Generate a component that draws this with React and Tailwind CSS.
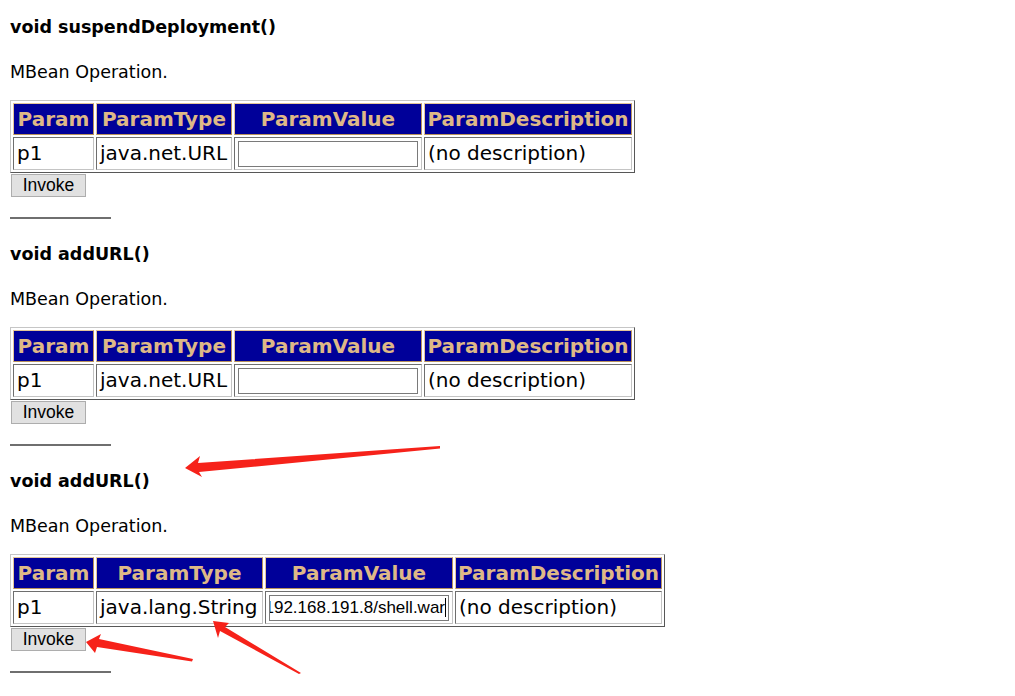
const operations = [
  {
    name: 'void suspendDeployment()',
    type: 'java.net.URL',
    value: '',
    cols: ['w-[81px]', 'w-[136px]', 'w-[188px]', 'w-[208px]'],
  },
  {
    name: 'void addURL()',
    type: 'java.net.URL',
    value: '',
    cols: ['w-[81px]', 'w-[136px]', 'w-[188px]', 'w-[208px]'],
  },
  {
    name: 'void addURL()',
    type: 'java.lang.String',
    value: 'http://192.168.191.8/shell.war',
    cols: ['w-[81px]', 'w-[167px]', 'w-[188px]', 'w-[207px]'],
  },
];

const headers = ['Param', 'ParamType', 'ParamValue', 'ParamDescription'];

const th =
  'h-[32px] bg-[#000099] text-[#deb887] font-bold text-[20px] leading-[28px] text-center px-[1px] border border-t-[#e2c49a] border-l-[#e2c49a] border-r-[#b8925e] border-b-[#b8925e] whitespace-nowrap';
const td =
  'h-[33px] text-[20px] leading-[27px] text-black px-[3px] align-middle border border-t-[#6e6e6e] border-l-[#6e6e6e] border-r-[#c4c4c4] border-b-[#c4c4c4] whitespace-nowrap';

const Operation = ({ op, first }) => (
  <section className={first ? 'pt-[16px]' : 'mt-[24px]'}>
    <h3 className="text-[17.5px] leading-[22px] font-bold text-black">{op.name}</h3>
    <p className="mt-[23px] text-[17.5px] leading-[22px] text-black">MBean Operation.</p>
    <table className="mt-[17px] border-separate border-spacing-[2px] border border-t-[#c6c6c6] border-l-[#c6c6c6] border-r-[#575757] border-b-[#575757]">
      <thead>
        <tr>
          {headers.map((h, i) => (
            <th key={h} className={`${th} ${op.cols[i]}`}>
              {h}
            </th>
          ))}
        </tr>
      </thead>
      <tbody>
        <tr>
          <td className={`${td} ${op.cols[0]}`}>p1</td>
          <td className={`${td} ${op.cols[1]}`}>{op.type}</td>
          <td className={`${td} ${op.cols[2]} px-[2px]`}>
            <div className="w-[180px] h-[26px] border border-[#7a7a7a] bg-white flex items-center justify-end overflow-hidden pr-[2px] font-['Liberation_Sans',sans-serif] text-[17px] leading-[24px]">
              {op.value && (
                <>
                  <span className="whitespace-nowrap shrink-0">{op.value}</span>
                  <span className="w-px h-[19px] bg-black shrink-0" />
                </>
              )}
            </div>
          </td>
          <td className={`${td} ${op.cols[3]}`}>(no description)</td>
        </tr>
      </tbody>
    </table>
    <button className="mt-[1px] ml-px w-[75px] h-[23px] bg-[#e1e1e1] border border-[#adadad] text-black font-['Liberation_Sans',sans-serif] text-[17.5px] leading-[21px]">
      Invoke
    </button>
    <div className="mt-[19px] w-[101px] h-[2px] bg-[#6f6f6f]" />
  </section>
);

export default function App() {
  return (
    <div className="relative w-[1015px] h-[696px] overflow-hidden bg-white px-[10px] font-['DejaVu_Sans',Verdana,sans-serif]">
      {operations.map((op, i) => (
        <Operation key={i} op={op} first={i === 0} />
      ))}
      <svg
        className="absolute inset-0 pointer-events-none"
        width="1015"
        height="696"
        viewBox="0 0 1015 696"
      >
        <g fill="#f6221a">
          <polygon points="185,468 200,456 198,463 440,446 440,448.5 199,472 202,477" />
          <polygon points="86,642 101,634 99,639 193,659 192,661.5 97,647 95,653" />
          <polygon points="213,621 229,623 225,627 301,673 299,674 220,631 218,638" />
        </g>
      </svg>
    </div>
  );
}
